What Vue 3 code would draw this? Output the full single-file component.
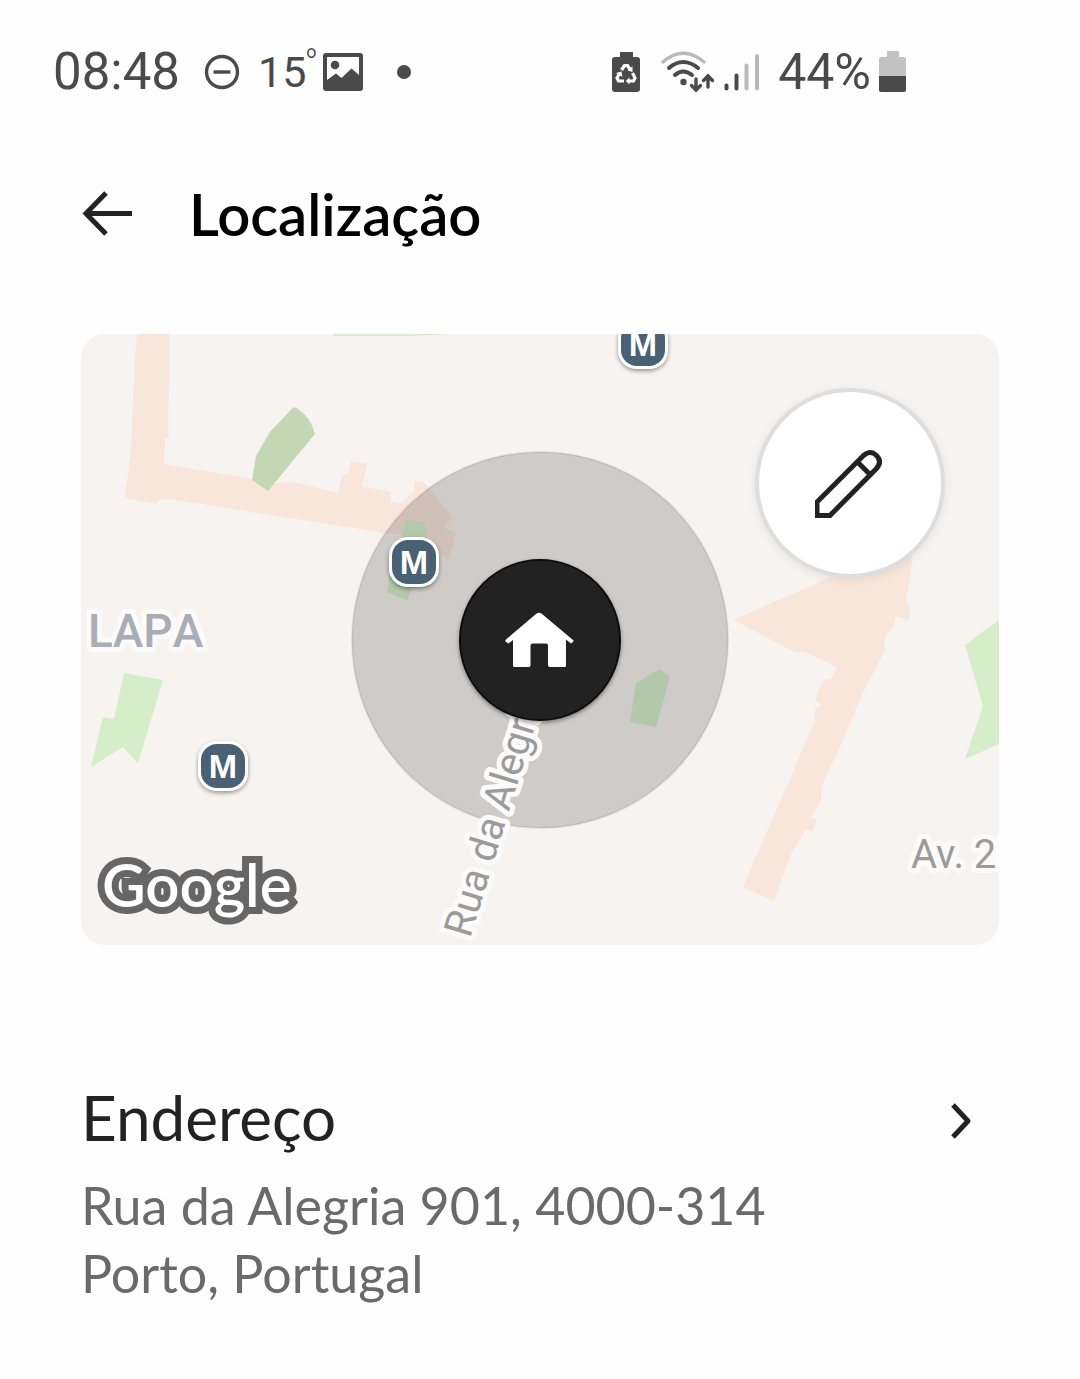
<script setup>
const stations = [
  { id: 'north', x: 643, y: 344 },
  { id: 'center', x: 414, y: 562 },
  { id: 'south', x: 223, y: 766 },
]

const commercialAreas = [
  '137,334 170,334 168,426 169,437 165,439 164,464 252,479 262,484 294,482 338,493 342,476 348,473 351,461 367,464 362,487 370,488 391,492 391,502 402,503 414,491 415,481 425,483 452,517 444,528 456,533 448,560 432,548 424,537 385,533 252,512 170,499 159,500 156,504 125,498 131,450 135,356',
  '733,620 831,577 860,540 912,555 911,574 906,601 909,604 909,620 896,616 893,628 888,632 884,644 885,650 879,662 874,672 869,681 865,688 844,738 822,785 821,800 811,817 817,820 812,831 806,829 790,856 774,901 743,887 815,721 815,709 821,705 815,700 823,680 831,679 837,667 804,652 795,652',
]

const parks = [
  '124,673 163,680 138,763 123,747 91,767 103,717 114,719',
  '999,620 965,645 983,706 965,759 999,744',
  '333,334 452,334 410,336 333,336',
]

const shadedParks = [
  '407,520 424,522 430,545 407,600 387,592 390,575',
  '660,669 670,677 656,727 630,722 636,683',
]
</script>

<template>
  <div class="screen">
    <div class="status">
      <div class="status-group status-left">
        <span class="clock">08:48</span>
        <svg width="36" height="36" viewBox="0 0 36 36" aria-hidden="true">
          <circle cx="18" cy="18" r="15.5" fill="none" stroke="#4a4a4a" stroke-width="3.4" />
          <path d="M9.5 18H26.5" stroke="#4a4a4a" stroke-width="3.4" />
        </svg>
        <span class="temp">15<sup>o</sup></span>
        <svg class="picture" width="40" height="38" viewBox="0 0 40 38" aria-hidden="true">
          <path fill="#4a4a4a" fill-rule="evenodd" d="M3 0H37Q40 0 40 3V35Q40 38 37 38H3Q0 38 0 35V3Q0 0 3 0ZM4 4V27L13 20.5L18.5 25L28.5 15.5L36 22V4Z" />
          <circle cx="12" cy="12" r="4.3" fill="#4a4a4a" />
        </svg>
        <svg width="14" height="14" viewBox="0 0 14 14" aria-hidden="true"><circle cx="7" cy="7" r="7" fill="#4a4a4a" /></svg>
      </div>
      <div class="status-group status-right">
        <svg width="28" height="42" viewBox="0 0 28 42" aria-hidden="true">
          <path fill="#4a4a4a" d="M8 1H21V6H25Q28 6 28 9V38Q28 41 25 41H3Q0 41 0 38V9Q0 6 3 6H8Z" />
          <g fill="none" stroke="#fff" stroke-width="3.2">
            <path d="M9.5 19L12.5 14.5H15.5L18.5 19" />
            <path d="M20.5 22L23 27L21.5 30H16" />
            <path d="M12 30H6.5L5 27L7.5 22.5" />
          </g>
          <path fill="#fff" d="M20.5 15.5V21L15.5 19.5ZM17.5 26.5V33.5L13.8 30ZM4 22L9.5 20.5L10.5 26Z" />
        </svg>
        <svg class="wifi" width="56" height="42" viewBox="0 0 56 42" aria-hidden="true">
          <g fill="none" stroke-linecap="round">
            <path d="M3 11Q23 -6.5 44 11" stroke="#b9b9b9" stroke-width="3.4" />
            <path d="M9 17Q23 5 38 17" stroke="#4a4a4a" stroke-width="4" />
            <path d="M15 24Q23 17 32 24" stroke="#4a4a4a" stroke-width="4" />
            <path d="M36 28V38M31.5 34.5L36 39L40.5 34.5M48 36V26M43.5 29.5L48 25L52.5 29.5" stroke="#4a4a4a" stroke-width="3.4" />
          </g>
          <circle cx="23.5" cy="31" r="3.2" fill="#4a4a4a" />
        </svg>
        <svg width="36" height="40" viewBox="0 0 36 40" aria-hidden="true">
          <g stroke-width="4" stroke-linecap="round">
            <path d="M2.5 33.5V36.5M12.5 23.5V36.5" stroke="#4a4a4a" />
            <path d="M22.5 13.5V36.5M33 4V36.5" stroke="#b9b9b9" />
          </g>
        </svg>
        <span class="percent">44%</span>
        <svg width="28" height="42" viewBox="0 0 28 42" aria-hidden="true">
          <path fill="#c2c2c2" d="M8 0H20V6H25Q27 6 27 8V26H0V8Q0 6 2 6H8Z" />
          <path fill="#4a4a4a" d="M0 25H27V39Q27 41 25 41H2Q0 41 0 39Z" />
        </svg>
      </div>
    </div>

    <header class="header">
      <button type="button" aria-label="Voltar">
        <svg width="52" height="46" viewBox="0 0 52 46" aria-hidden="true">
          <path d="M25 2L5 22.5L25 43M5 22.5H51" fill="none" stroke="#222" stroke-width="5" />
        </svg>
      </button>
      <h1 class="title">Localização</h1>
    </header>

    <main>
      <section class="map" aria-label="Mapa">
        <svg class="map-canvas" viewBox="81 334 918 611">
          <defs>
            <filter id="soft-shadow" x="-30%" y="-30%" width="160%" height="170%">
              <feDropShadow dx="0" dy="2" stdDeviation="2" flood-color="#000" flood-opacity="0.4" />
            </filter>
            <g id="station">
              <rect x="-25" y="-25" width="50" height="50" rx="19" fill="#fff" />
              <rect x="-22" y="-22" width="44" height="44" rx="16" fill="#486075" />
            </g>
          </defs>

          <polygon v-for="area in commercialAreas" :key="area" :points="area" class="commercial" />
          <path class="park-deep" d="M292 408.5Q295 406.5 298 409Q311 418 315 434L268 491L252 480L256 456L270 432Z" />
          <polygon v-for="park in parks" :key="park" :points="park" class="park" />

          <circle cx="540" cy="640" r="188" class="halo" />
          <polygon v-for="park in shadedParks" :key="park" :points="park" class="park-shaded" />

          <text x="88" y="647" class="label district">LAPA</text>
          <text x="911" y="868" class="label street">Av. 25</text>
          <text class="label street" transform="translate(470 939) rotate(-73)">Rua da Alegria</text>

          <g v-for="station in stations" :key="station.id" :transform="`translate(${station.x} ${station.y})`">
            <use href="#station" filter="url(#soft-shadow)" />
            <text y="12" class="station-letter">M</text>
          </g>

          <g filter="url(#soft-shadow)">
            <circle cx="540" cy="640" r="80" fill="#222" stroke="#111" stroke-width="2" />
          </g>
          <path
            fill="#fff"
            d="M536 614Q539 611.5 542 614L573 640Q574 641 573 642L571 643.5L566 639.5V665.5Q566 667 564.5 667H550Q548 667 548 665V645.5Q548 643.5 546 643.5H532.5Q530.5 643.5 530.5 645.5V665Q530.5 667 529 667H514.5Q513 667 513 665.5V640L508.5 643.5L505.5 641.5Q505 640.5 506 639.5Z"
          />

          <text x="102" y="907" class="logo">Google</text>
        </svg>
        <button class="edit" type="button" aria-label="Editar localização">
          <svg width="70" height="70" viewBox="0 0 70 70" aria-hidden="true">
            <path d="M2 67.5V54L48.5 7.5Q55.5 1.5 61.5 7.5Q67.5 13.5 61.5 20.500L15 67.500ZM42.5 14L55 26.500" fill="none" stroke="#222" stroke-width="5" />
          </svg>
        </button>
      </section>

      <button class="address" type="button">
        <span class="address-text">
          <span class="address-title">Endereço</span>
          <span class="address-line">Rua da Alegria 901, 4000-314<br />Porto, Portugal</span>
        </span>
        <svg class="chevron" width="24" height="36" viewBox="0 0 24 36" aria-hidden="true">
          <path d="M2 2L17 18L2 34" fill="none" stroke="#222" stroke-width="5" stroke-linejoin="round" />
        </svg>
      </button>
    </main>
  </div>
</template>

<style>
body {
  margin: 0;
  background: #fefefe;
}
</style>

<style scoped>
.screen {
  padding: 40px 81px 64px;
  color: #222;
  font-family: Lato, "Open Sans", sans-serif;
}

button {
  padding: 0;
  border: 0;
  background: none;
  color: inherit;
  font: inherit;
  text-align: left;
  cursor: pointer;
}

svg {
  display: block;
  flex: none;
}

.status {
  display: flex;
  justify-content: space-between;
  height: 64px;
  margin: 0 92px 0 -28px;
  color: #4a4a4a;
  font-family: Roboto, sans-serif;
  font-size: 50px;
  line-height: 64px;
}

.status-group {
  display: flex;
  align-items: center;
}

.status-left {
  gap: 24px;
}

.clock {
  font-size: 51px;
}

.temp {
  display: flex;
  margin-left: -6px;
  font-size: 43px;
}

.temp sup {
  font-size: 18px;
  line-height: 24px;
}

.picture {
  margin-left: -18px;
}

.picture + svg {
  margin-left: 10px;
}

.status-right {
  gap: 8px;
}

.wifi {
  margin-left: 12px;
}

.percent {
  margin-left: 10px;
}

.header {
  display: flex;
  align-items: center;
  gap: 56px;
  height: 80px;
  margin-top: 70px;
}

.title {
  margin: 0;
  color: #000;
  font-size: 58px;
  font-weight: 600;
  line-height: 80px;
}

.map {
  position: relative;
  margin-top: 80px;
  overflow: hidden;
  border-radius: 24px;
  background: #f6f3f0;
}

.map-canvas {
  width: 100%;
  height: auto;
}

.commercial {
  fill: #f9e6db;
}

.park {
  fill: #d5edc8;
}

.park-deep {
  fill: #c3d7b5;
}

.park-shaded {
  fill: #b3c7aa;
}

.halo {
  fill: rgba(4, 0, 0, 0.165);
  stroke: rgba(0, 0, 0, 0.08);
  stroke-width: 2px;
}

.label {
  font-family: Roboto, sans-serif;
  stroke: #fcfbfa;
  stroke-width: 10px;
  stroke-linejoin: round;
  paint-order: stroke;
}

.district {
  fill: #a9adb5;
  font-size: 46px;
  font-weight: 500;
  font-kerning: none;
}

.street {
  fill: #9b9b9b;
  font-size: 40px;
}

.station-letter {
  fill: #fff;
  font-family: "Liberation Sans", Arial, sans-serif;
  font-size: 34px;
  font-weight: 700;
  text-anchor: middle;
}

.logo {
  fill: #fff;
  stroke: #666;
  stroke-width: 14px;
  paint-order: stroke;
  font-family: Lato, sans-serif;
  font-size: 60px;
  font-weight: 600;
}

.edit {
  position: absolute;
  top: 58px;
  right: 58px;
  display: grid;
  place-items: center;
  width: 182px;
  height: 182px;
  border-radius: 50%;
  background: #fff;
  box-shadow: 0 0 0 4px #dedede, 0 2px 10px 4px rgba(0, 0, 0, 0.08);
}

.address {
  display: flex;
  align-items: flex-start;
  justify-content: space-between;
  width: 100%;
  margin-top: 132px;
}

.address-text {
  display: flex;
  flex-direction: column;
  gap: 14px;
}

.address-title {
  font-size: 62px;
  line-height: 80px;
}

.address-line {
  color: #6a6a6a;
  font-size: 52px;
  line-height: 68px;
}

.chevron {
  margin: 26px 24px 0 0;
}
</style>
